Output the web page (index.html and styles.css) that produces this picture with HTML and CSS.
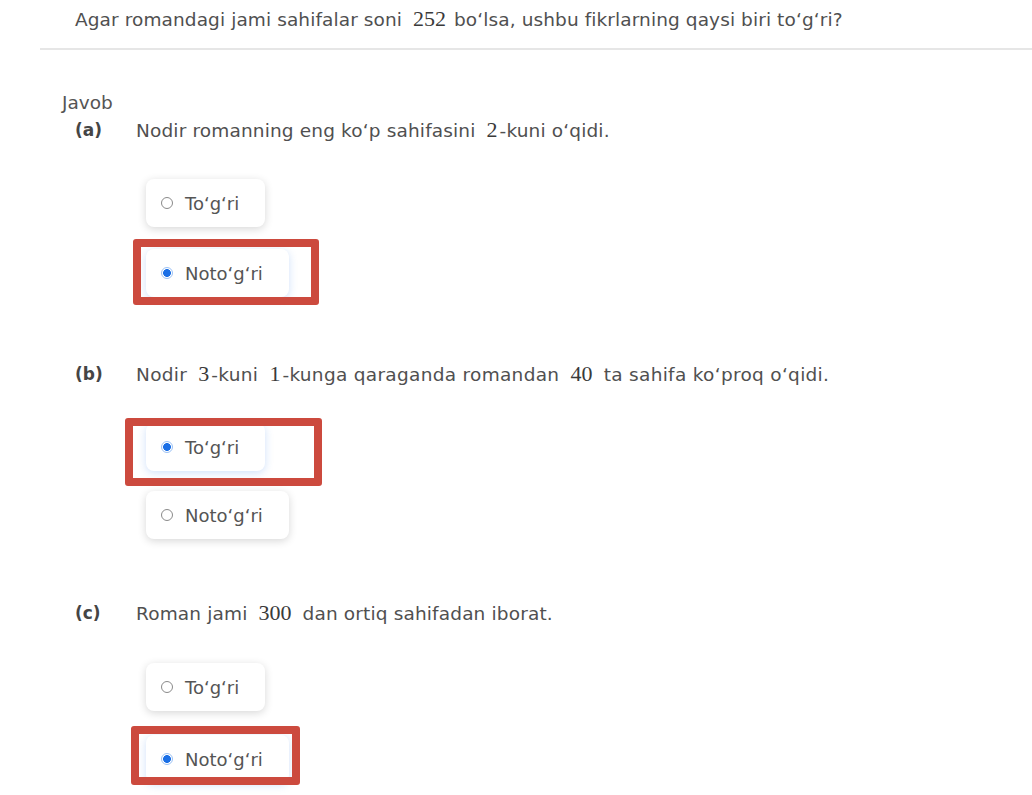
FILE: index.html
```html
<!DOCTYPE html>
<html lang="uz">
<head>
<meta charset="utf-8">
<title>Javob</title>
<link rel="stylesheet" href="styles.css">
</head>
<body>
<div class="page">
  <div class="stem">Agar romandagi jami sahifalar soni <span class="num">252</span> bo‘lsa, ushbu fikrlarning qaysi biri to‘g‘ri?</div>
  <div class="rule"></div>
  <div class="answer">
    <div class="answer-title">Javob</div>

    <div class="item item-a">
      <div class="row"><span class="tag">(a)</span><span class="qtext">Nodir romanning eng ko‘p sahifasini <span class="num">2</span>-kuni o‘qidi.</span></div>
      <div class="options">
        <div class="opt-wrap"><label class="opt"><span class="radio"></span><span>To‘g‘ri</span></label></div>
        <div class="opt-wrap"><label class="opt sel"><span class="radio on"></span><span>Noto‘g‘ri</span></label><span class="mark mark-a"></span></div>
      </div>
    </div>

    <div class="item item-b">
      <div class="row"><span class="tag">(b)</span><span class="qtext">Nodir <span class="num">3</span>-kuni <span class="num">1</span>-kunga qaraganda romandan <span class="num sp">40</span> ta sahifa ko‘proq o‘qidi.</span></div>
      <div class="options">
        <div class="opt-wrap"><label class="opt sel"><span class="radio on"></span><span>To‘g‘ri</span></label><span class="mark mark-b"></span></div>
        <div class="opt-wrap"><label class="opt"><span class="radio"></span><span>Noto‘g‘ri</span></label></div>
      </div>
    </div>

    <div class="item item-c">
      <div class="row"><span class="tag">(c)</span><span class="qtext">Roman jami <span class="num sp">300</span> dan ortiq sahifadan iborat.</span></div>
      <div class="options">
        <div class="opt-wrap"><label class="opt"><span class="radio"></span><span>To‘g‘ri</span></label></div>
        <div class="opt-wrap"><label class="opt sel"><span class="radio on"></span><span>Noto‘g‘ri</span></label><span class="mark mark-c"></span></div>
      </div>
    </div>
  </div>
</div>
</body>
</html>
```
FILE: styles.css
```css
* { box-sizing: border-box; }
html, body { margin: 0; padding: 0; background: #ffffff; }
body {
  font-family: "DejaVu Sans", "Noto Sans", sans-serif;
  color: #555555;
  font-size: 17px;
  width: 1032px;
  height: 795px;
  overflow: hidden;
}
.page { padding-top: 8px; }
.stem {
  padding-left: 75px;
  height: 20px;
  line-height: 20px;
  font-size: 18.5px;
  letter-spacing: 0.1px;
  color: #505050;
  white-space: nowrap;
}
.num {
  font-family: "Liberation Serif", "DejaVu Serif", serif;
  font-size: 22px;
  line-height: 1;
  letter-spacing: 0;
  margin: 0 2px 0 5px;
  color: #3a3a3a;
}
.num.sp { margin-right: 5px; }
.rule {
  margin: 20px 0 0 40px;
  height: 2px;
  background: #e6e6e6;
}
.answer { padding-left: 62px; padding-top: 43px; }
.answer-title { line-height: 20px; height: 20px; font-size: 18.5px; color: #555; }
.row {
  display: flex;
  align-items: center;
  height: 20px;
  line-height: 20px;
  padding-left: 13px;
  margin-top: 7px;
  white-space: nowrap;
}
.tag { width: 61px; font-weight: 700; font-size: 17px; color: #454545; }
.qtext { font-size: 18.5px; letter-spacing: 0.15px; color: #505050; }
.item-b .qtext { letter-spacing: 0.3px; }
.options {
  display: flex;
  flex-direction: column;
  align-items: flex-start;
  gap: 22px;
  padding-left: 84px;
  margin-top: 39px;
}
.opt-wrap { position: relative; }
.opt {
  display: flex;
  align-items: center;
  gap: 12px;
  height: 48px;
  padding: 0 26px 0 15px;
  background: #fff;
  border-radius: 8px;
  box-shadow: 0 2px 8px rgba(0, 0, 0, 0.16);
  font-size: 18px;
  color: #555;
}
.opt.sel { box-shadow: 0 2px 8px rgba(40, 120, 230, 0.22); }
.radio {
  width: 12px;
  height: 12px;
  border-radius: 50%;
  border: 1px solid #8a8a8a;
  background: #fff;
  flex: none;
}
.radio.on {
  border: 1px solid #9cc2f5;
  background: radial-gradient(circle, #1a6fe6 0 3.6px, #fff 4.2px);
}
.mark {
  position: absolute;
  border: 8px solid #cc4a3e;
  border-radius: 3px;
  pointer-events: none;
}
.mark-a { left: -13px; top: -10px; width: 186px; height: 66px; }
.mark-b { left: -21px; top: -5px; width: 197px; height: 68px; }
.mark-c { left: -15px; top: -9px; width: 169px; height: 59px; }
.item-b .row { margin-top: 67px; }
.item-b .options { gap: 20px; }
.item-c .row { margin-top: 64px; }
.item-c .options { margin-top: 40px; gap: 24px; }
```
